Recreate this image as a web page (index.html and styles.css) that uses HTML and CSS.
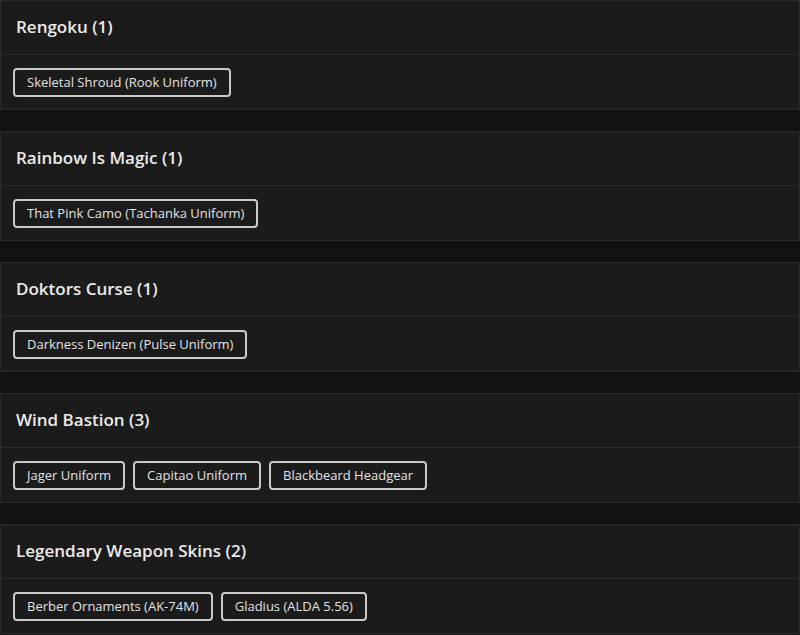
FILE: index.html
```html
<!DOCTYPE html>
<html>
<head>
<meta charset="utf-8">
<link rel="stylesheet" href="styles.css">
</head>
<body>
<div class="list">
  <section class="card">
    <div class="card-head">Rengoku (1)</div>
    <div class="card-body">
      <span class="tag">Skeletal Shroud (Rook Uniform)</span>
    </div>
  </section>
  <section class="card">
    <div class="card-head">Rainbow Is Magic (1)</div>
    <div class="card-body">
      <span class="tag">That Pink Camo (Tachanka Uniform)</span>
    </div>
  </section>
  <section class="card">
    <div class="card-head">Doktors Curse (1)</div>
    <div class="card-body">
      <span class="tag">Darkness Denizen (Pulse Uniform)</span>
    </div>
  </section>
  <section class="card">
    <div class="card-head">Wind Bastion (3)</div>
    <div class="card-body">
      <span class="tag">Jager Uniform</span>
      <span class="tag">Capitao Uniform</span>
      <span class="tag">Blackbeard Headgear</span>
    </div>
  </section>
  <section class="card">
    <div class="card-head">Legendary Weapon Skins (2)</div>
    <div class="card-body">
      <span class="tag">Berber Ornaments (AK-74M)</span>
      <span class="tag">Gladius (ALDA 5.56)</span>
    </div>
  </section>
</div>
</body>
</html>
```
FILE: styles.css
```css
html, body {
  margin: 0;
  padding: 0;
  background: #121212;
  font-family: "Open Sans", "Noto Sans", sans-serif;
  color: #e6e6e6;
}
.list {
  display: flex;
  flex-direction: column;
  gap: 21px;
  width: 800px;
}
.card {
  background: #1b1b1b;
  border: 1px solid #2a2a2a;
  box-sizing: border-box;
}
.card-head {
  height: 54px;
  box-sizing: border-box;
  padding: 0 0 2px 15px;
  display: flex;
  align-items: center;
  font-size: 17px;
  font-weight: 600;
  color: #ebebeb;
  border-bottom: 1px solid #2c2c2c;
}
.card-body {
  height: 54px;
  box-sizing: border-box;
  padding: 0 12px;
  display: flex;
  align-items: center;
  gap: 8px;
}
.tag {
  height: 29px;
  box-sizing: border-box;
  border: 2px solid #c9c9c9;
  border-radius: 4px;
  padding: 0 12px;
  display: flex;
  align-items: center;
  font-size: 13px;
  color: #e2e2e2;
}
```
